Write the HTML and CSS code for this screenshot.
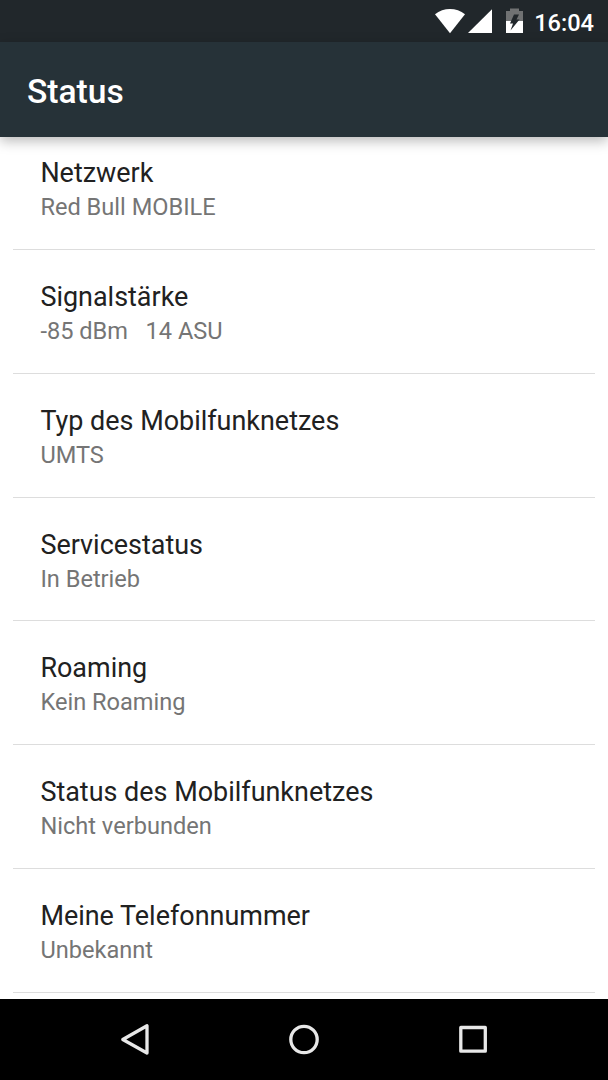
FILE: index.html
```html
<!DOCTYPE html>
<html lang="de">
<head>
<meta charset="utf-8">
<title>Status</title>
<link rel="stylesheet" href="styles.css">
</head>
<body>
<div class="screen">
  <header class="statusbar">
    <svg class="icons" width="92" height="42" viewBox="0 0 92 42">
      <path fill="#fff" d="M0 14.300C8.500 7.300 21.500 7.300 30 14.300L15 33.200Z"/>
      <path fill="#fff" d="M57 9.200V33H33Z"/>
      <path fill="#707273" d="M71 11h4V8.500h9V11h4v10H71z"/>
      <path fill="#fff" d="M71 21h17v12H71z"/>
      <path fill="#21272b" d="M79 14.500H84L81.500 19.500H84.500L75.500 30.500L78 23.500H75Z"/>
    </svg>
    <span class="clock">16:04</span>
  </header>
  <div class="appbar"><h1 class="title">Status</h1></div>
  <main class="list">
    <section class="item"><h2 class="name">Netzwerk</h2><p class="value">Red Bull MOBILE</p></section>
    <section class="item"><h2 class="name">Signalstärke</h2><p class="value">-85 dBm   14 ASU</p></section>
    <section class="item"><h2 class="name">Typ des Mobilfunknetzes</h2><p class="value">UMTS</p></section>
    <section class="item"><h2 class="name">Servicestatus</h2><p class="value">In Betrieb</p></section>
    <section class="item"><h2 class="name">Roaming</h2><p class="value">Kein Roaming</p></section>
    <section class="item"><h2 class="name">Status des Mobilfunknetzes</h2><p class="value">Nicht verbunden</p></section>
    <section class="item"><h2 class="name">Meine Telefonnummer</h2><p class="value">Unbekannt</p></section>
  </main>
  <nav class="navbar">
    <svg width="608" height="81" viewBox="0 0 608 81" fill="none" stroke="#e8e8e8" stroke-width="3.300" stroke-linejoin="round">
      <path d="M147 26.800V54L122.800 40.500Z"/>
      <circle cx="304" cy="40.500" r="13.200"/>
      <rect x="460.800" y="28.500" width="24.500" height="23.700"/>
    </svg>
  </nav>
</div>
</body>
</html>
```
FILE: styles.css
```css
* { box-sizing: border-box; }
body { margin: 0; font-family: Roboto, sans-serif; }
.screen { width: 608px; height: 1080px; display: flex; flex-direction: column; overflow: hidden; background: #fff; }
.statusbar { height: 42px; flex: none; display: flex; justify-content: space-between; padding: 0 14px 0 435px; background: #21272b; color: #fff; }
.icons { flex: none; }
.clock { font-size: 23.600px; font-weight: 500; line-height: 46px; }
.appbar { height: 95px; flex: none; padding-left: 27px; background: #263238; color: #fff; box-shadow: 0 4px 12px rgba(0,0,0,.28); position: relative; }
.title { margin: 0; font-size: 33.600px; font-weight: 500; line-height: 100px; }
.list { flex: 1; min-height: 0; overflow: hidden; padding: 0 13.400px; }
.item { height: 123.800px; padding: 30px 0 0 27px; border-bottom: 1px solid #ddd; }
.item:first-child { height: 113.100px; padding-top: 19.300px; }
.name { margin: 0; font-size: 26.950px; font-weight: 400; line-height: 34px; color: #212121; }
.value { margin: 0; font-size: 23.600px; line-height: 34px; color: #757575; white-space: pre; }
.navbar { height: 81px; flex: none; background: #000; }
.navbar svg { display: block; }
```
